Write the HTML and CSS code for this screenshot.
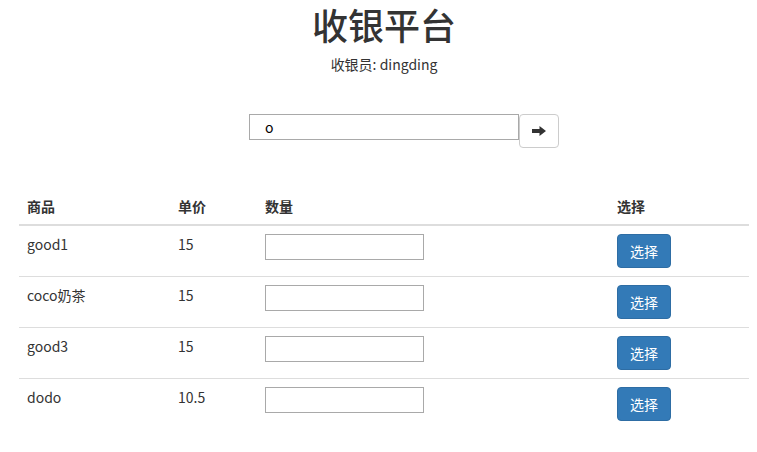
FILE: index.html
```html
<!DOCTYPE html>
<html lang="zh">
<head>
<meta charset="utf-8">
<title>收银平台</title>
<link rel="stylesheet" href="styles.css">
</head>
<body>
<div class="page">
  <header class="head">
    <h1 class="title">收银平台</h1>
    <p class="cashier">收银员: dingding</p>
  </header>
  <div class="search">
    <input class="search-input" type="text" value="o">
    <button class="btn btn-default" type="button" aria-label="搜索">
      <svg width="14" height="10" viewBox="0 0 14 10"><path d="M0 3h7.5V0L14 5l-6.5 5V7H0z" fill="#333"/></svg>
    </button>
  </div>
  <table class="table">
    <thead>
      <tr><th class="c1">商品</th><th class="c2">单价</th><th class="c3">数量</th><th class="c4">选择</th></tr>
    </thead>
    <tbody>
      <tr><td>good1</td><td>15</td><td><input class="qty" type="text"></td><td><button class="btn btn-primary" type="button">选择</button></td></tr>
      <tr><td>coco奶茶</td><td>15</td><td><input class="qty" type="text"></td><td><button class="btn btn-primary" type="button">选择</button></td></tr>
      <tr><td>good3</td><td>15</td><td><input class="qty" type="text"></td><td><button class="btn btn-primary" type="button">选择</button></td></tr>
      <tr><td>dodo</td><td>10.5</td><td><input class="qty" type="text"></td><td><button class="btn btn-primary" type="button">选择</button></td></tr>
    </tbody>
  </table>
</div>
</body>
</html>
```
FILE: styles.css
```css
html, body {
  margin: 0;
  padding: 0;
  background: #fff;
}
body {
  font-family: "Noto Sans CJK SC", "Noto Sans", sans-serif;
  font-size: 14px;
  line-height: 20px;
  color: #333;
}
.page {
  padding: 0 8px 0 19px;
}
.head {
  text-align: center;
}
.title {
  font-size: 36px;
  font-weight: 500;
  line-height: 48px;
  margin: 0;
}
.cashier {
  margin: 6px 0 0;
  font-size: 14px;
  line-height: 20px;
}
.search {
  display: flex;
  align-items: flex-start;
  padding-left: 230px;
  margin-top: 40px;
}
.search-input {
  box-sizing: border-box;
  width: 270px;
  height: 26px;
  border: 1px solid #a9a9a9;
  padding: 0 0 0 15px;
  font-family: "Noto Sans CJK SC", sans-serif;
  font-size: 14px;
  color: #000;
  margin: 0;
}
.btn {
  box-sizing: border-box;
  display: inline-flex;
  align-items: center;
  justify-content: center;
  border-radius: 4px;
  font-family: inherit;
  font-size: 14px;
  line-height: 20px;
  padding: 6px 12px;
  margin: 0;
  height: 34px;
  cursor: pointer;
}
.btn-default {
  width: 40px;
  background: #fff;
  border: 1px solid #ccc;
  padding: 0;
}
.btn-primary {
  width: 54px;
  background: #337ab7;
  border: 1px solid #2e6da4;
  color: #fff;
}
.table {
  width: 730px;
  border-collapse: collapse;
  border-spacing: 0;
  margin-top: 40px;
}
.table th, .table td {
  text-align: left;
  padding: 8px;
  line-height: 20px;
}
.table th {
  font-weight: 700;
  vertical-align: bottom;
  border-bottom: 2px solid #ddd;
}
.table td {
  vertical-align: top;
  border-top: 1px solid #ddd;
}
.table tbody tr:first-child td {
  border-top: 0;
}
.c1 { width: 135px; }
.c2 { width: 71px; }
.c3 { width: 336px; }
.qty {
  box-sizing: border-box;
  width: 159px;
  height: 26px;
  border: 1px solid #a9a9a9;
  margin: 0;
  padding: 0 4px;
}
```
